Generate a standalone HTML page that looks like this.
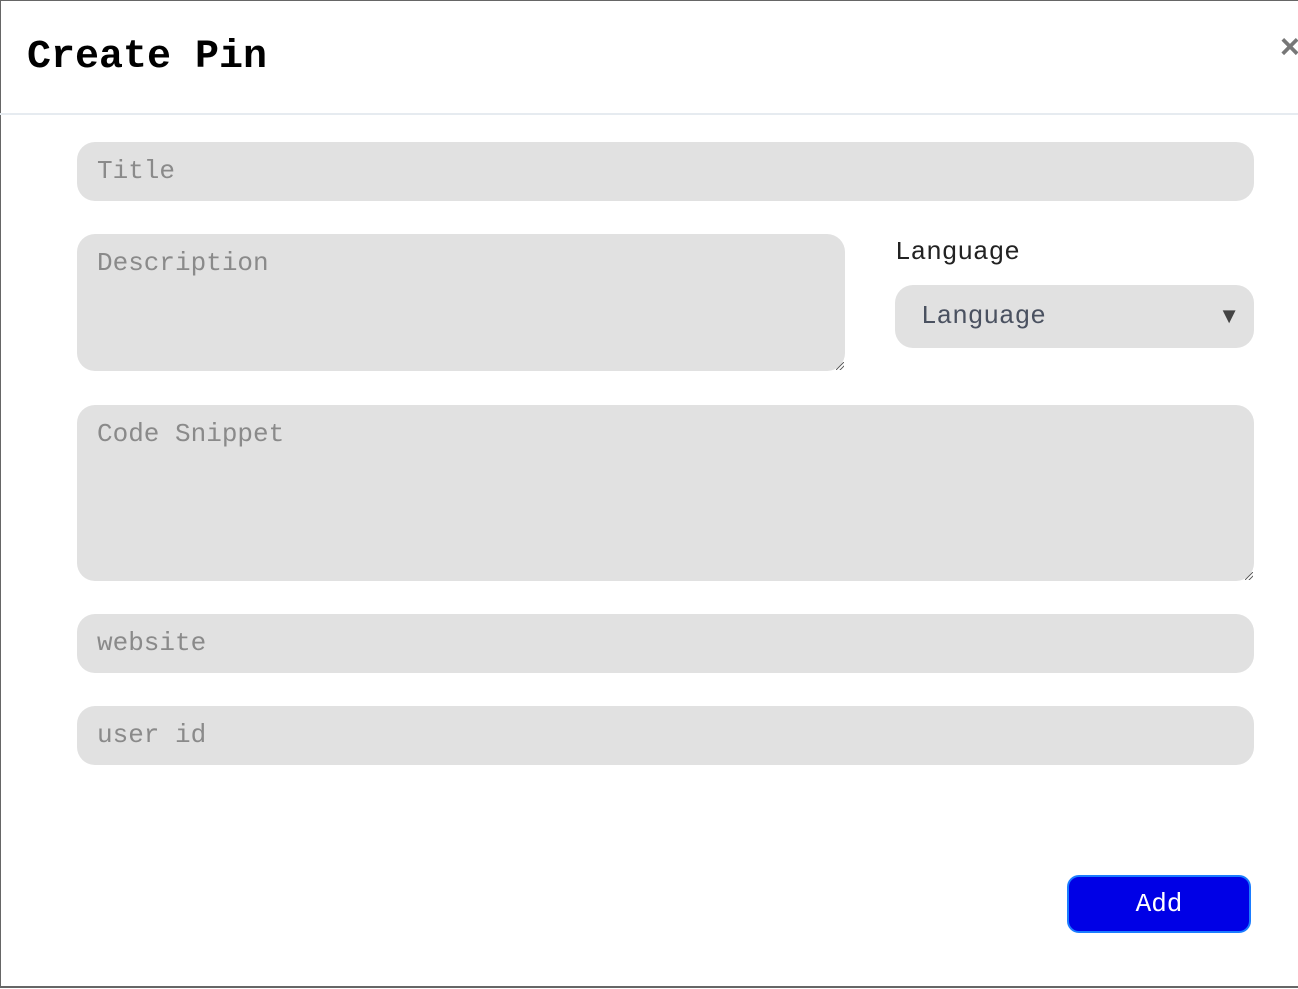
<!DOCTYPE html>
<html><head><style>
html,body{margin:0;padding:0;background:#fff;}
body{width:1298px;height:989px;position:relative;overflow:hidden;font-family:"Liberation Mono",monospace;}
.modal{position:absolute;left:0;top:0;width:1310px;height:988px;border:1px solid #666;box-sizing:border-box;border-right:none;border-bottom:2px solid #666;}
.hdr{position:absolute;left:0;top:113px;width:1298px;height:2px;background:#e6ebf0;}
h1{position:absolute;left:27px;top:36px;margin:0;font-size:40px;font-weight:bold;line-height:44px;color:#000;}
.x{position:absolute;left:1280px;top:28px;font-size:34px;font-weight:bold;color:#777;font-family:"Liberation Sans",sans-serif;}
.f{position:absolute;background:#e1e1e1;border-radius:18px;box-sizing:border-box;padding-left:20px;font-size:26px;color:#8a8a8a;}
.lbl{position:absolute;left:895px;top:237px;font-size:26px;color:#222;}
.btn{position:absolute;left:1067px;top:875px;width:184px;height:58px;box-sizing:border-box;border:2px solid #1a7cff;background:#0000e6;border-radius:12px;color:#fff;font-size:26px;text-align:center;line-height:54px;}
.rz{position:absolute;width:8px;height:8px;background:linear-gradient(135deg,transparent 45%,#666 45%,#666 55%,transparent 55%,transparent 70%,#666 70%,#666 80%,transparent 80%);}
</style></head><body>
<div class="modal"></div>
<h1>Create Pin</h1>
<div class="x">×</div>
<div class="hdr"></div>
<div class="f" style="left:77px;top:142px;width:1177px;height:59px;line-height:58px;">Title</div>
<div class="f" style="left:77px;top:234px;width:768px;height:137px;padding-top:13px;line-height:32px;">Description</div>
<div class="rz" style="left:836px;top:362px;"></div>
<div class="lbl">Language</div>
<div class="f" style="left:895px;top:285px;width:359px;height:63px;line-height:62px;padding-left:26px;color:#4a5160;">Language<span style="position:absolute;right:14px;top:0;font-size:22px;color:#444;font-family:'Liberation Sans',sans-serif;">▼</span></div>
<div class="f" style="left:77px;top:405px;width:1177px;height:176px;padding-top:13px;line-height:32px;">Code Snippet</div>
<div class="rz" style="left:1245px;top:572px;"></div>
<div class="f" style="left:77px;top:614px;width:1177px;height:59px;line-height:58px;">website</div>
<div class="f" style="left:77px;top:706px;width:1177px;height:59px;line-height:58px;">user id</div>
<div class="btn">Add</div>
</body></html>
